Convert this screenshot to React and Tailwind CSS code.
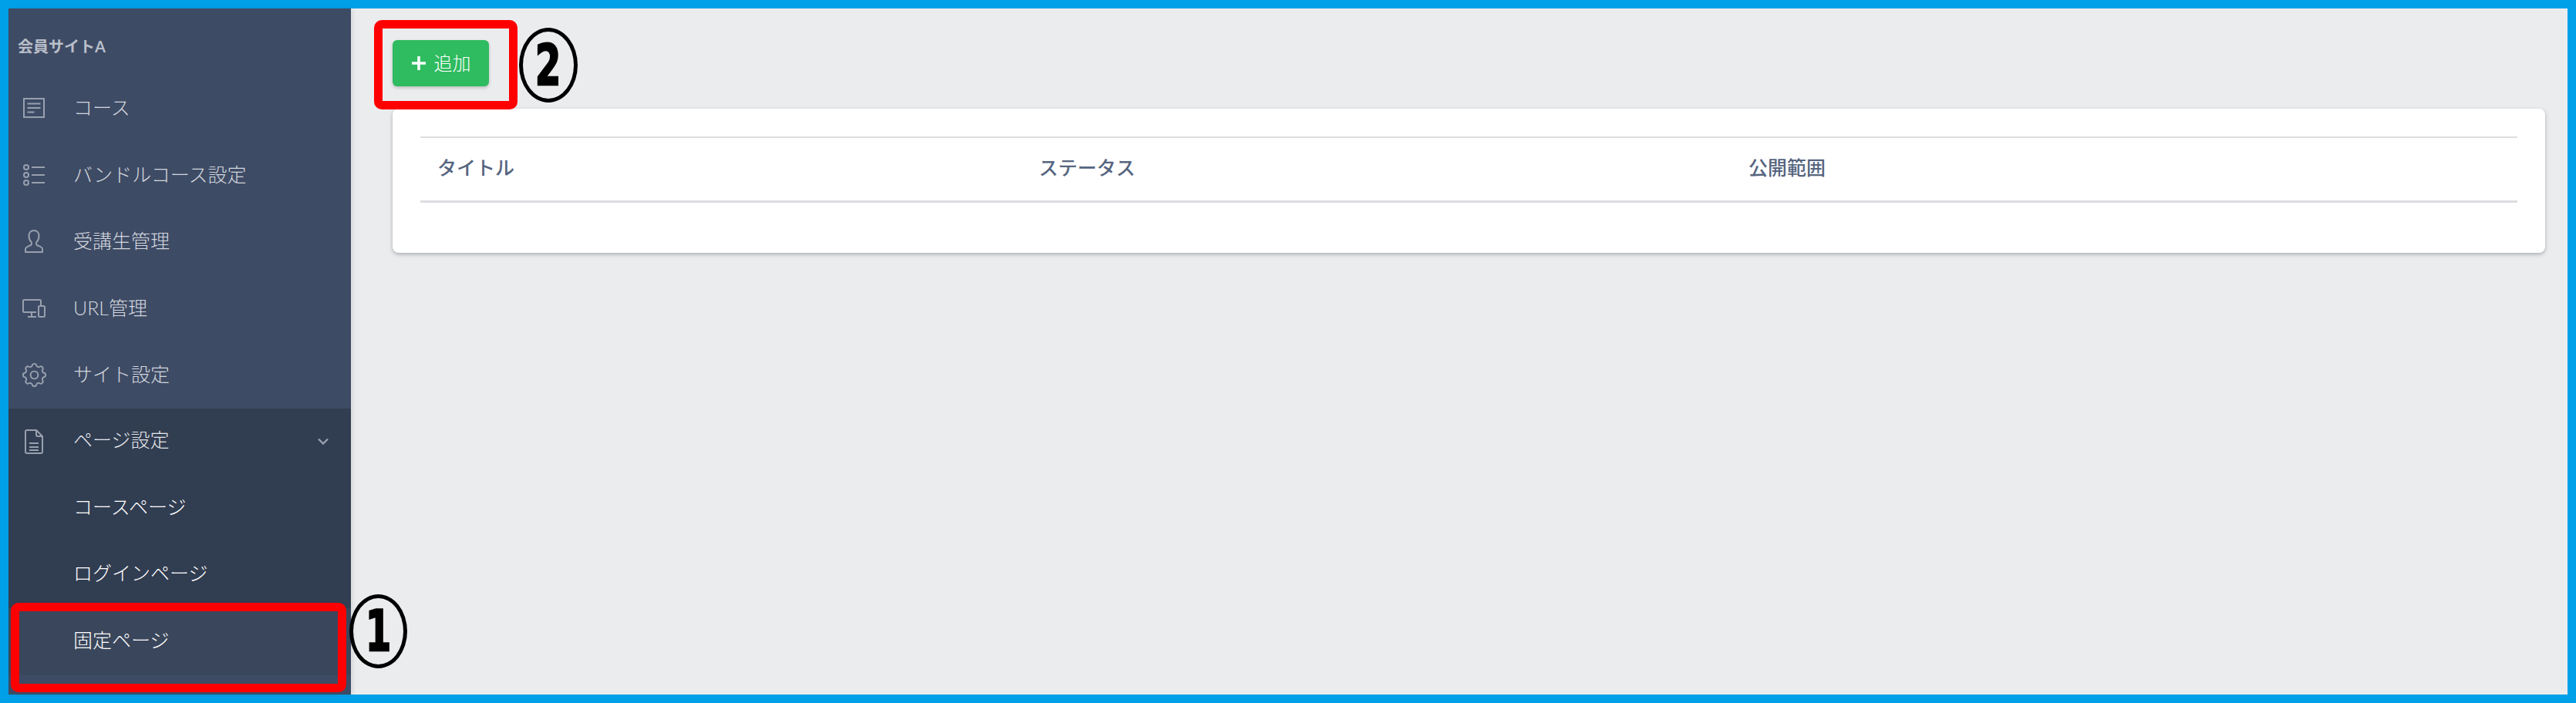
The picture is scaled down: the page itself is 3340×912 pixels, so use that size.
import React from "react";

function CourseIcon() {
  return (
    <svg viewBox="0 0 28 26" width="28" height="26" fill="none" stroke="currentColor" strokeWidth="2">
      <rect x="1" y="1" width="26" height="24" />
      <path d="M5.500 7.500h17M5.500 13h17M5.500 18.500h9" />
    </svg>
  );
}

function BundleIcon() {
  return (
    <svg viewBox="0 0 28 28" width="28" height="28" fill="none" stroke="currentColor" strokeWidth="2">
      <circle cx="4" cy="4" r="3" />
      <circle cx="4" cy="14" r="3" />
      <circle cx="4" cy="24" r="3" />
      <path d="M11 4h17M11 14h17M11 24h17" />
    </svg>
  );
}

function UserIcon() {
  return (
    <svg viewBox="0 0 24 30" width="24" height="30" fill="none" stroke="currentColor" strokeWidth="2" strokeLinejoin="round">
      <path d="M12 1c-4 0-6.500 3-6.500 7 0 3.500 1.500 6.500 3 8 .8 1 .8 3-.5 4C5 21.500 1 22.500 1 25v4h22v-4c0-2.500-4-3.500-7-5-1.300-1-1.300-3-.5-4 1.500-1.500 3-4.500 3-8 0-4-2.500-7-6.500-7z" />
    </svg>
  );
}

function DevicesIcon() {
  return (
    <svg viewBox="0 0 30 24" width="30" height="24" fill="none" stroke="currentColor" strokeWidth="2">
      <path d="M18 17H2.500A1.500 1.500 0 0 1 1 15.500V2.500A1.500 1.500 0 0 1 2.500 1h20A1.500 1.500 0 0 1 24 2.500V8" />
      <path d="M12 17v5M7 23h11" />
      <rect x="21" y="9" width="8" height="14" rx="1.500" />
    </svg>
  );
}

function GearIcon() {
  return (
    <svg viewBox="0 0 24 24" width="39" height="39" fill="none" stroke="currentColor" strokeWidth="1.200" strokeLinejoin="round">
      <path d="M10.325 4.317c.426-1.756 2.924-1.756 3.350 0a1.724 1.724 0 002.573 1.066c1.543-.940 3.310.826 2.370 2.370a1.724 1.724 0 001.065 2.572c1.756.426 1.756 2.924 0 3.350a1.724 1.724 0 00-1.066 2.573c.940 1.543-.826 3.310-2.370 2.370a1.724 1.724 0 00-2.572 1.065c-.426 1.756-2.924 1.756-3.350 0a1.724 1.724 0 00-2.573-1.066c-1.543.940-3.310-.826-2.370-2.370a1.724 1.724 0 00-1.065-2.572c-1.756-.426-1.756-2.924 0-3.350a1.724 1.724 0 001.066-2.573c-.940-1.543.826-3.310 2.370-2.370.996.608 2.296.070 2.572-1.065z" />
      <circle cx="12" cy="12" r="3" />
    </svg>
  );
}

function DocIcon() {
  return (
    <svg viewBox="0 0 24 32" width="24" height="32" fill="none" stroke="currentColor" strokeWidth="2" strokeLinejoin="round">
      <path d="M3 1h12l8 8v20a2 2 0 0 1-2 2H3a2 2 0 0 1-2-2V3a2 2 0 0 1 2-2z" />
      <path d="M15 1v6a2 2 0 0 0 2 2h6M6 18h12M6 23h12M6 27h12" />
    </svg>
  );
}

const menu = [
  { label: "コース", icon: <CourseIcon /> },
  { label: "バンドルコース設定", icon: <BundleIcon /> },
  { label: "受講生管理", icon: <UserIcon /> },
  { label: "URL管理", icon: <DevicesIcon /> },
  { label: "サイト設定", icon: <GearIcon /> },
];

const subMenu = ["コースページ", "ログインページ"];

function Annotation({ className, children }) {
  return (
    <div className={"absolute flex items-center justify-center rounded-[50%] border-[5px] border-black text-black font-bold text-[62px] leading-none font-['DejaVu_Sans',sans-serif] " + className}>
      <span className="scale-x-[0.78] scale-y-[1.18] [-webkit-text-stroke:2px_black]">{children}</span>
    </div>
  );
}

export default function App() {
  return (
    <div className="h-screen bg-[#00a0e9] p-[11px] font-['Lato','Noto_Sans_CJK_JP',sans-serif]">
      <div className="relative flex h-full bg-[#ebecee]">
        <aside className="flex w-[444px] shrink-0 flex-col bg-[#3e4b65] shadow-[2px_0_6px_rgba(0,0,0,0.1)]">
          <div className="flex h-[86px] items-start pl-3 pt-[36px] text-[20px] leading-[26px] font-bold text-[#b9bfc9]">
            会員サイトA
          </div>
          {menu.map((m) => (
            <div key={m.label} className="flex h-[86.5px] items-center pb-[1px] text-[25px] font-light text-[#d3d7de]">
              <span className="mr-[18px] flex w-[66px] justify-center pt-[1px] text-[#98a0ae]">{m.icon}</span>
              <span>{m.label}</span>
            </div>
          ))}
          <div className="flex h-[86px] items-center bg-[#313d51] pb-[3px] text-[25px] font-light text-[#e4e7eb]">
            <span className="mr-[18px] flex w-[66px] justify-center pt-[3px] text-[#98a0ae]"><DocIcon /></span>
            <span>ページ設定</span>
            <svg className="ml-auto mr-[29px] mt-[3px] text-[#98a0ae]" viewBox="0 0 14 10" width="14" height="10" fill="none" stroke="currentColor" strokeWidth="2.400">
              <path d="M1 1.500l6 6 6-6" />
            </svg>
          </div>
          <div className="flex flex-col bg-[#313d51] text-[25px] font-light text-white">
            {subMenu.map((s) => (
              <div key={s} className="flex h-[86.5px] items-center pb-[3px] pl-[84px]">{s}</div>
            ))}
          </div>
          <div className="flex h-[87px] items-center bg-[#3a465b] pb-[3px] pl-[84px] text-[25px] font-light text-white">
            固定ページ
          </div>
        </aside>

        <main className="flex-1 pl-[54px] pr-[29px] pt-[41px]">
          <button className="flex h-[60px] w-[125px] items-center justify-center gap-[10px] rounded-[6px] bg-[#2fbb5f] text-[24px] font-light text-white shadow-[0_2px_4px_rgba(0,0,0,0.2)]">
            <svg viewBox="0 0 20 20" width="20" height="20" fill="none" stroke="currentColor" strokeWidth="3.500">
              <path d="M10 1v18M1 10h18" />
            </svg>
            追加
          </button>
          <div className="mt-[29px] h-[187px] rounded-[8px] bg-white px-9 pt-9 shadow-[0_2px_5px_rgba(45,55,72,0.35)]">
            <div className="grid h-[86px] grid-cols-[780px_920px_1fr] items-center border-t-2 border-b-[3px] border-[#dcdde1] pb-[3px] pl-[22px] text-[25px] font-medium text-[#56657f]">
              <span>タイトル</span>
              <span>ステータス</span>
              <span>公開範囲</span>
            </div>
          </div>
        </main>

        <div className="absolute left-[3px] top-[771px] h-[116px] w-[435px] rounded-[10px] border-[11px] border-[#ff0000]" />
        <Annotation className="left-[442px] top-[760px] h-[96px] w-[75px]">1</Annotation>
        <div className="absolute left-[474px] top-[15px] h-[116px] w-[186px] rounded-[10px] border-[11px] border-[#ff0000]" />
        <Annotation className="left-[662px] top-[25px] h-[97px] w-[76px]">2</Annotation>
      </div>
    </div>
  );
}
